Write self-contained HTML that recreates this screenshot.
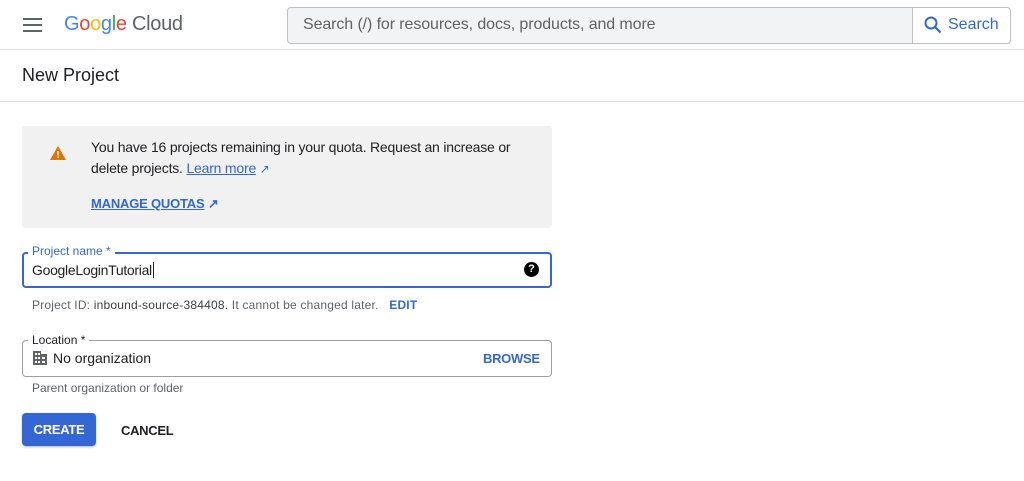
<!DOCTYPE html><html><head><style>
body{margin:0;width:1024px;height:481px;background:#fff;font-family:"Liberation Sans",Arial,sans-serif;position:relative;overflow:hidden;color:#202124}
.a{position:absolute}
</style></head><body>
<div class="a" style="left:0;top:0;width:1024px;height:49px;border-bottom:1px solid #e0e0e0"></div>
<div class="a" style="left:23px;top:18px;width:19px;height:2px;background:#5f6368;box-shadow:0 6px 0 #5f6368,0 12px 0 #5f6368"></div>
<div class="a" style="left:64px;top:13px;font-size:20px;letter-spacing:-0.3px"><span style="color:#4285f4">G</span><span style="color:#ea4335">o</span><span style="color:#fbbc05">o</span><span style="color:#4285f4">g</span><span style="color:#34a853">l</span><span style="color:#ea4335">e</span> <span style="color:#5f6368">Cloud</span></div>
<div class="a" style="left:287px;top:7px;width:722px;height:35px;border:1px solid #bdc1c6;border-radius:4px;background:#f1f3f4"></div>
<div class="a" style="left:912px;top:8px;width:97px;height:35px;background:#fff;border-left:1px solid #bdc1c6;border-radius:0 4px 4px 0"></div>
<div class="a" style="left:303px;top:16px;font-size:16px;color:#5f6368;letter-spacing:-0.1px">Search (/) for resources, docs, products, and more</div>
<svg class="a" style="left:923px;top:15px" width="20" height="20" viewBox="0 0 20 20"><circle cx="8" cy="8" r="5.5" fill="none" stroke="#3367d6" stroke-width="2"/><path d="M12 12l5.5 5.5" stroke="#3367d6" stroke-width="2.2"/></svg>
<div class="a" style="left:948px;top:16px;font-size:16px;color:#3367d6">Search</div>
<div class="a" style="left:22px;top:65px;font-size:18px">New Project</div>
<div class="a" style="left:0;top:101px;width:1024px;height:1px;background:#e0e0e0"></div>
<div class="a" style="left:22px;top:126px;width:530px;height:102px;background:#f1f1f1;border-radius:3px"></div>
<svg class="a" style="left:50px;top:146px" width="16" height="14" viewBox="0 0 16 14"><path d="M8 0L16 14H0z" fill="#e37400"/><rect x="7.2" y="5" width="1.6" height="4.5" fill="#fff"/><rect x="7.2" y="10.5" width="1.6" height="1.6" fill="#fff"/></svg>
<div class="a" style="left:91px;top:137px;font-size:14px;line-height:21px;width:430px;letter-spacing:-0.2px">You have 16 projects remaining in your quota. Request an increase or delete projects. <span style="color:#3367d6;text-decoration:underline">Learn more</span> <span style="color:#3367d6;font-size:12px">↗</span></div>
<div class="a" style="left:91px;top:196px;font-size:13px;color:#3367d6;font-weight:bold;letter-spacing:-0.2px"><span style="text-decoration:underline">MANAGE QUOTAS</span> ↗</div>
<div class="a" style="left:22px;top:252px;width:526px;height:32px;border:2px solid #3367d6;border-radius:4px"></div>
<div class="a" style="left:28px;top:244px;font-size:12px;color:#3367d6;background:#fff;padding:0 4px">Project name *</div>
<div class="a" style="left:32px;top:262px;font-size:14px;letter-spacing:-0.3px">GoogleLoginTutorial<span style="border-left:1px solid #202124;margin-left:1px"></span></div>
<div class="a" style="left:524px;top:262px;width:15px;height:15px;border-radius:50%;background:#000;color:#fff;font-size:11px;font-weight:bold;text-align:center;line-height:15px">?</div>
<div class="a" style="left:32px;top:298px;font-size:12px;color:#5f6368;letter-spacing:0.2px">Project ID: <span style="color:#3c4043">inbound-source-384408.</span> It cannot be changed later. &nbsp; <b style="color:#3367d6">EDIT</b></div>
<div class="a" style="left:22px;top:340px;width:528px;height:35px;border:1px solid #9aa0a6;border-radius:4px"></div>
<div class="a" style="left:28px;top:333px;font-size:12px;background:#fff;padding:0 4px">Location *</div>
<svg class="a" style="left:33px;top:351px" width="14" height="14" viewBox="0 0 14 14"><path d="M0 0h8v3h6v11H0z" fill="#5f6368"/><g fill="#fff"><rect x="2" y="2" width="2" height="2"/><rect x="5" y="2" width="2" height="2"/><rect x="2" y="6" width="2" height="2"/><rect x="5" y="6" width="2" height="2"/><rect x="2" y="10" width="2" height="2"/><rect x="5" y="10" width="2" height="2"/><rect x="9" y="6" width="3" height="2"/><rect x="9" y="10" width="3" height="2"/></g></svg>
<div class="a" style="left:53px;top:350px;font-size:14px">No organization</div>
<div class="a" style="left:483px;top:351px;font-size:13px;font-weight:bold;color:#3367d6;letter-spacing:-0.3px">BROWSE</div>
<div class="a" style="left:32px;top:381px;font-size:12px;color:#5f6368">Parent organization or folder</div>
<div class="a" style="left:22px;top:413px;width:74px;height:33px;background:#3367d6;border-radius:4px;box-shadow:0 1px 2px rgba(0,0,0,.3);color:#fff;font-size:13px;font-weight:bold;text-align:center;line-height:33px;letter-spacing:-0.3px">CREATE</div>
<div class="a" style="left:121px;top:423px;font-size:13px;font-weight:bold;letter-spacing:-0.3px">CANCEL</div>
</body></html>
